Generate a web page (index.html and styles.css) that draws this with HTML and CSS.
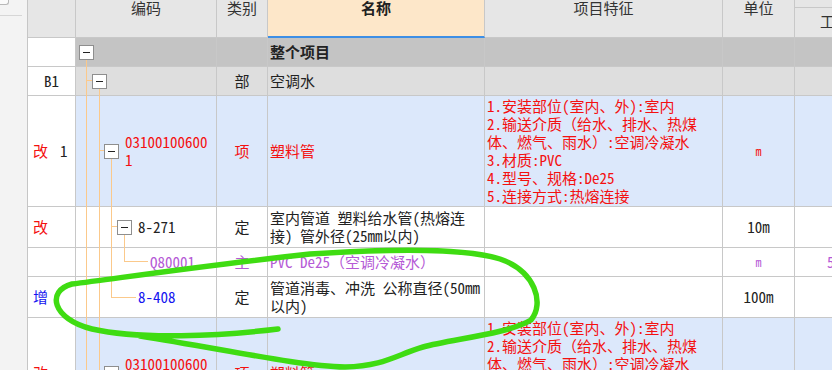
FILE: index.html
```
<!DOCTYPE html>
<html>

<head>
    <title>分部分项</title>
    <meta charset="utf-8">
    <link rel="stylesheet" href="styles.css">
</head>

<body>
    <div class="screen">
        <div class="side">
            <div class="side-tab"></div>
            <div class="side-rule"></div>
        </div>

        <div class="sheet">
            <div class="row head">
                <div class="cell idx"></div>
                <div class="cell th">编码</div>
                <div class="cell th">类别</div>
                <div class="cell th name">名称</div>
                <div class="cell th">项目特征</div>
                <div class="cell th">单位</div>
                <div class="cell th qty">
                    <div class="qty-top"></div>
                    <span class="qty-label">工</span>
                </div>
            </div>

            <!-- 整个项目 -->
            <div class="row r-all">
                <div class="cell idx"></div>
                <div class="cell code l0"><span class="fold"></span></div>
                <div class="cell kind"></div>
                <div class="cell title bold">整个项目</div>
                <div class="cell feat"></div>
                <div class="cell unit"></div>
                <div class="cell qty"></div>
            </div>

            <div class="row r-part">
                <div class="cell idx center">B1</div>
                <div class="cell code l1"><span class="fold"></span></div>
                <div class="cell kind">部</div>
                <div class="cell title">空调水</div>
                <div class="cell feat"></div>
                <div class="cell unit"></div>
                <div class="cell qty"></div>
            </div>

            <div class="row r-item">
                <div class="cell idx"><span class="red">改</span><span class="no">1</span></div>
                <div class="cell code l2 red"><span class="fold"></span><span class="code-text">031001006001</span></div>
                <div class="cell kind red">项</div>
                <div class="cell title red">塑料管</div>
                <div class="cell feat red">1.安装部位(室内、外):室内<br>2.输送介质（给水、排水、热煤<br>体、燃气、雨水）:空调冷凝水<br>3.材质:PVC<br>4.型号、规格:De25<br>5.连接方式:热熔连接</div>
                <div class="cell unit red small">m</div>
                <div class="cell qty"></div>
            </div>

            <div class="row r-quota">
                <div class="cell idx"><span class="red">改</span></div>
                <div class="cell code l3"><span class="fold"></span>8-271</div>
                <div class="cell kind">定</div>
                <div class="cell title">室内管道 塑料给水管(热熔连<br>接) 管外径(25mm以内)</div>
                <div class="cell feat"></div>
                <div class="cell unit">10m</div>
                <div class="cell qty"></div>
            </div>

            <div class="row r-mat">
                <div class="cell idx"></div>
                <div class="cell code leaf-mat purple">Q80001…</div>
                <div class="cell kind purple">主</div>
                <div class="cell title purple">PVC De25（空调冷凝水）</div>
                <div class="cell feat"></div>
                <div class="cell unit purple small">m</div>
                <div class="cell qty purple">5</div>
            </div>

            <div class="row r-quota">
                <div class="cell idx"><span class="blue">增</span></div>
                <div class="cell code leaf-quota blue">8-408</div>
                <div class="cell kind">定</div>
                <div class="cell title">管道消毒、冲洗 公称直径(50mm<br>以内)</div>
                <div class="cell feat"></div>
                <div class="cell unit">100m</div>
                <div class="cell qty"></div>
            </div>

            <div class="row r-item">
                <div class="cell idx"><span class="red">改</span></div>
                <div class="cell code l2 red"><span class="fold"></span><span class="code-text">031001006002</span></div>
                <div class="cell kind red">项</div>
                <div class="cell title red">塑料管</div>
                <div class="cell feat red">1.安装部位(室内、外):室内<br>2.输送介质（给水、排水、热煤<br>体、燃气、雨水）:空调冷凝水<br>3.材质:PVC<br>4.型号、规格:De20<br>5.连接方式:热熔连接</div>
                <div class="cell unit red small">m</div>
                <div class="cell qty"></div>
            </div>
        </div>

        <!-- 树形连接线 -->
        <svg class="tree" width="832" height="370" viewBox="0 0 832 370">
            <g stroke="#fbc98b" stroke-width="1" fill="none">
                <path d="M86.5 58 V370" />
                <path d="M99.5 87 V370" />
                <path d="M111.5 157 V297.5" />
                <path d="M124.5 233 V261.5" />
                <path d="M86 80.5 H93" />
                <path d="M99 150.5 H105" />
                <path d="M111 226.5 H118" />
                <path d="M124 261.5 H148" />
                <path d="M111 297.5 H136" />
            </g>
        </svg>

        <!-- 手绘标记 -->
        <svg class="mark" width="832" height="370" viewBox="0 0 832 370">
            <path d="M278 329 C220 336 140 340 92 329 C52 319 46 291 72 284 C120 278 200 266 310 254 C400 248 468 249 500 259 C535 271 545 303 531 320 C508 334 452 339 423 347 C396 355 384 366 345 367 C300 366 228 350 140 336" fill="none" stroke="#3fdc12" stroke-width="5.5" stroke-linecap="round" stroke-linejoin="round" />
        </svg>
    </div>
</body>

</html>
```

FILE: styles.css
```
body {
    margin: 0;
    font: 15px/18px "Noto Sans Mono CJK SC", "Noto Sans CJK SC", sans-serif;
    color: #222;
    background-color: #f2f2f2;
}

.screen {
    position: relative;
    width: 832px;
    height: 370px;
    overflow: hidden;
    display: flex;
}

/* bande grise de gauche */
.side {
    width: 28px;
    flex: none;
    box-sizing: border-box;
    border-right: 1px solid #c6c6c6;
    background-color: #f3f3f3;
}

.side-tab {
    width: 8px;
    height: 4px;
    border-right: 1px solid #b8b8b8;
    border-bottom: 1px solid #b8b8b8;
    border-bottom-right-radius: 3px;
    background-color: #fafafa;
}

.side-rule {
    width: 22px;
    height: 1px;
    margin-top: 10px;
    background-color: #d6d6d6;
}

.sheet {
    width: 804px;
    flex: none;
    display: flex;
    flex-direction: column;
}

.row {
    display: grid;
    grid-template-columns: 48px 141px 51px 217px 238px 72px 1fr;
    flex: none;
}

.cell {
    box-sizing: border-box;
    border-right: 1px solid #c8c8c8;
    border-bottom: 1px solid #c8c8c8;
    display: flex;
    align-items: center;
    white-space: nowrap;
    overflow: hidden;
}

.cell.qty {
    border-right: none;
}

/* hauteurs des lignes */
.head {
    height: 38px;
    background-color: #e6e6e6;
}

.r-all {
    height: 29px;
    background-color: #c4c4c4;
}

.r-part {
    height: 29px;
    background-color: #dedede;
}

.r-item {
    height: 111px;
    background-color: #dce8fb;
}

.r-quota {
    height: 41px;
    background-color: #fff;
}

.r-mat {
    height: 29px;
    background-color: #fff;
}

/* en-tete */
.th {
    align-items: flex-start;
    justify-content: center;
    line-height: 16px;
    color: #333;
}

.th.name {
    background-color: #fde7c9;
    font-weight: bold;
    color: #222;
    border-bottom: 2px solid #3d8fe6;
}

.th.qty {
    flex-direction: column;
    justify-content: flex-start;
}

.qty-top {
    width: 100%;
    height: 8px;
    box-sizing: border-box;
    border-bottom: 1px solid #c8c8c8;
}

.qty-label {
    margin-top: 5px;
    padding-left: 25px;
}

/* colonne numero */
.idx {
    background-color: #fff;
    padding-left: 5px;
}

.head .idx {
    background-color: #e6e6e6;
}

.idx.center {
    justify-content: center;
    padding-left: 0;
}

.no {
    margin-left: 12px;
}

/* colonne code (arbre) */
.code.l0 {
    padding-left: 3px;
}

.code.l1 {
    padding-left: 16px;
}

.code.l2 {
    padding-left: 28px;
}

.code.l3 {
    padding-left: 41px;
}

.code.leaf-mat {
    padding-left: 74px;
}

.code.leaf-quota {
    padding-left: 62px;
}

.code-text {
    white-space: normal;
    word-break: break-all;
    width: 84px;
}

.fold {
    position: relative;
    z-index: 1;
    flex: none;
    width: 15px;
    height: 15px;
    box-sizing: border-box;
    margin-right: 6px;
    border: 1px solid #8e8e8e;
    background-color: #fff;
    display: flex;
    align-items: center;
    justify-content: center;
}

.fold::before {
    content: "";
    width: 7px;
    height: 1px;
    background-color: #222;
}

.kind,
.unit {
    justify-content: center;
}

.title {
    padding-left: 2px;
}

.bold {
    font-weight: bold;
}

.feat {
    align-items: flex-start;
    padding: 1px 0 0 2px;
}

.qty.purple {
    padding-left: 32px;
}

.small {
    font-size: 12px;
}

.red {
    color: #f41010;
}

.blue {
    color: #1414f0;
}

.purple {
    color: #b55ad6;
}

/* calques */
.tree,
.mark {
    position: absolute;
    left: 0;
    top: 0;
    pointer-events: none;
}

.mark {
    z-index: 2;
}
```
